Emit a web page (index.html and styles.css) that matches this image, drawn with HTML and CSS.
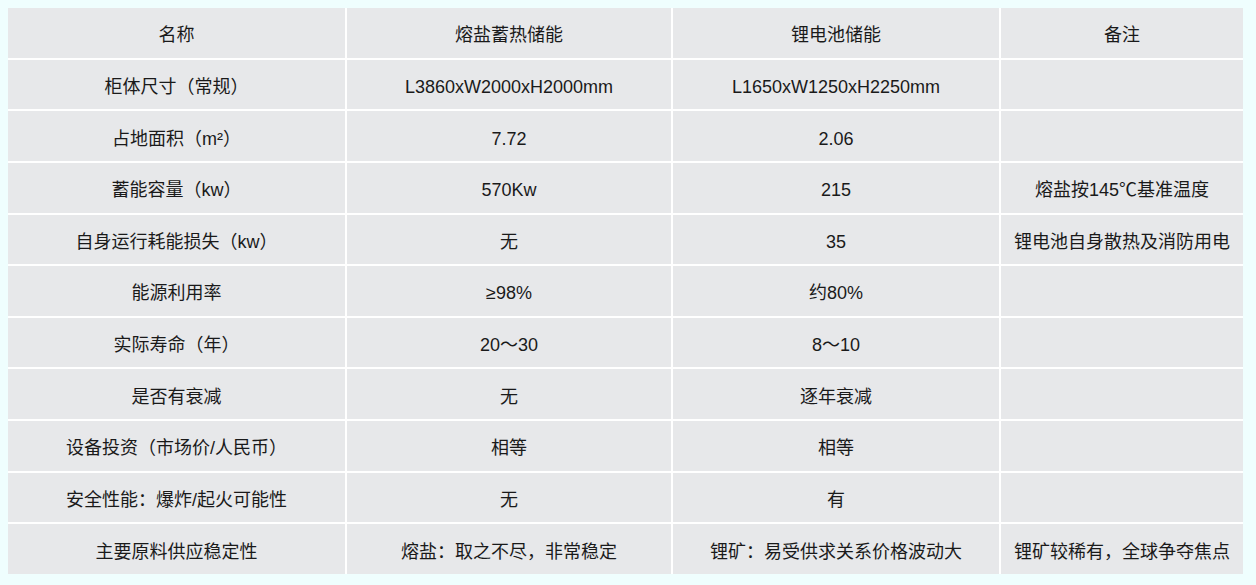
FILE: index.html
```html
<!DOCTYPE html>
<html lang="zh-CN">
<head>
<meta charset="utf-8">
<title>储能对比</title>
<link rel="stylesheet" href="styles.css">
</head>
<body>
<div class="table">
  <div class="cell">名称</div><div class="cell">熔盐蓄热储能</div><div class="cell">锂电池储能</div><div class="cell">备注</div>
  <div class="cell">柜体尺寸（常规）</div><div class="cell">L3860xW2000xH2000mm</div><div class="cell">L1650xW1250xH2250mm</div><div class="cell"></div>
  <div class="cell">占地面积（m²）</div><div class="cell">7.72</div><div class="cell">2.06</div><div class="cell"></div>
  <div class="cell">蓄能容量（kw）</div><div class="cell">570Kw</div><div class="cell">215</div><div class="cell">熔盐按145℃基准温度</div>
  <div class="cell">自身运行耗能损失（kw）</div><div class="cell">无</div><div class="cell">35</div><div class="cell">锂电池自身散热及消防用电</div>
  <div class="cell">能源利用率</div><div class="cell">≥98%</div><div class="cell">约80%</div><div class="cell"></div>
  <div class="cell">实际寿命（年）</div><div class="cell">20～30</div><div class="cell">8～10</div><div class="cell"></div>
  <div class="cell">是否有衰减</div><div class="cell">无</div><div class="cell">逐年衰减</div><div class="cell"></div>
  <div class="cell">设备投资（市场价/人民币）</div><div class="cell">相等</div><div class="cell">相等</div><div class="cell"></div>
  <div class="cell">安全性能：爆炸/起火可能性</div><div class="cell">无</div><div class="cell">有</div><div class="cell"></div>
  <div class="cell">主要原料供应稳定性</div><div class="cell">熔盐：取之不尽，非常稳定</div><div class="cell">锂矿：易受供求关系价格波动大</div><div class="cell">锂矿较稀有，全球争夺焦点</div>
</div>
</body>
</html>
```

FILE: styles.css
```css
html, body {
  margin: 0;
  padding: 0;
  background: #effefe;
}
body {
  padding: 8px;
  font-family: "Liberation Sans", "Noto Sans CJK SC", sans-serif;
  font-size: 18px;
  color: #1a1a1a;
}
.table {
  display: grid;
  grid-template-columns: 337px 324px 326px 242px;
  grid-template-rows: repeat(11, 1fr);
  gap: 2px;
  width: 1235px;
  height: 566px;
  background: #ffffff;
}
.cell {
  background: #e7e8ea;
  display: flex;
  align-items: center;
  justify-content: center;
  white-space: nowrap;
  line-height: 1;
  padding-top: 5px;
  box-sizing: border-box;
}
```
